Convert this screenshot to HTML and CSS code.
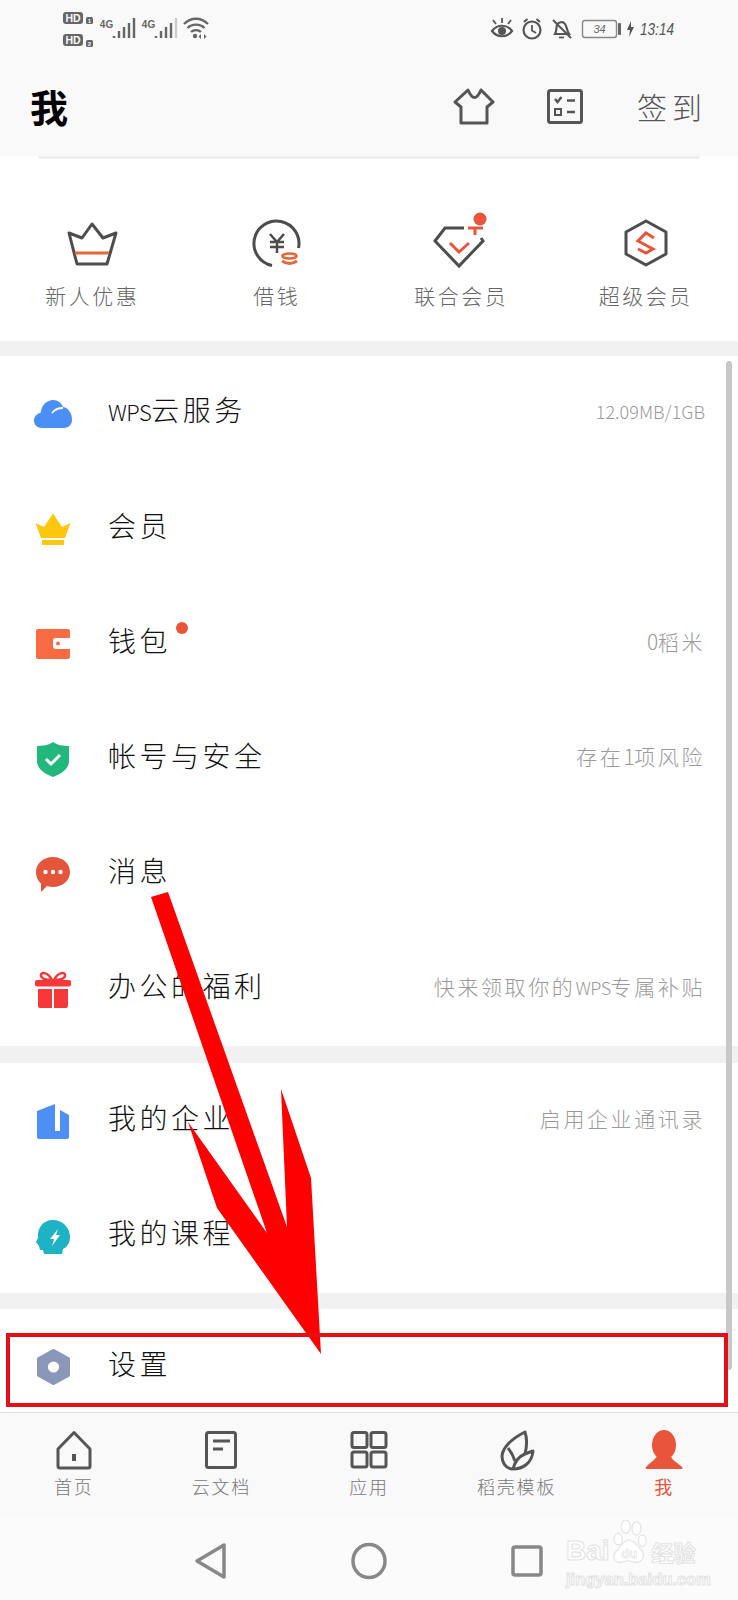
FILE: index.html
```html
<!DOCTYPE html>
<html lang="zh-CN">
<head>
<meta charset="utf-8">
<title>我</title>
<link rel="stylesheet" href="styles.css">
</head>
<body>
<div class="phone">
  <header class="top">
    <div class="status">
      <svg class="st-left" width="150" height="40" viewBox="62 10 150 40">
        <rect x="63" y="12" width="20" height="12" rx="3" fill="#666"/>
        <text x="73" y="22" class="hd">HD</text>
        <rect x="86" y="17" width="7" height="7" rx="1.5" fill="#666"/>
        <text x="89.5" y="23" class="sim">1</text>
        <rect x="63" y="34" width="20" height="12" rx="3" fill="#666"/>
        <text x="73" y="44" class="hd">HD</text>
        <rect x="86" y="40" width="7" height="7" rx="1.5" fill="#666"/>
        <text x="89.5" y="46" class="sim">2</text>
        <text x="106.5" y="28" class="g4">4G</text>
        <g stroke="#666" stroke-width="2.4" fill="none">
          <path d="M114 36V38M119 31V38M124 27V38M129 23V38M134 18V38"/>
          <path d="M156 36V38M161 31V38M166 27V38M171 23V38"/>
          <path d="M176 18V38" stroke="#ccc"/>
        </g>
        <text x="148.5" y="28" class="g4">4G</text>
        <g stroke="#666" stroke-width="2.4" fill="none">
          <path d="M184 24C191 17 201 17 208 24"/>
          <path d="M187.500 28C192 23.500 200 23.500 204.500 28"/>
          <path d="M191 32C193.500 29.500 198.500 29.500 201 32"/>
        </g>
        <circle cx="195" cy="36" r="2.200" fill="#666"/>
        <path d="M201 34V39L198.500 36.500ZM204 34V39L206.500 36.500Z" fill="#666"/>
      </svg>
      <svg class="st-right" width="200" height="26" viewBox="490 16 200 26">
        <g fill="none" stroke="#555" stroke-width="2.200">
          <path d="M492 31C497 24 507 24 512 31C507 38 497 38 492 31Z"/>
          <path d="M493 20L496 24M502 18V23M511 20L508 24" stroke-width="1.800"/>
          <circle cx="532" cy="30" r="8.500"/>
          <path d="M532 25V30.500L536 33" stroke-width="1.800"/>
          <path d="M524 22L527.500 19M540 22L536.500 19" stroke-width="2"/>
          <path d="M555 34C557 31 556 27 557 25C558 22 563 21 565 24C567 27 567 31 569 34Z"/>
          <path d="M553 20L571 38" stroke-width="2"/>
          <path d="M559 37.500H564" stroke-width="1.800"/>
          <rect x="582.500" y="20.500" width="34" height="17" rx="2.500" stroke="#888" stroke-width="1.400"/>
        </g>
        <circle cx="502" cy="31" r="4" fill="#555"/>
        <rect x="618" y="23" width="3" height="12" rx="1" fill="#666"/>
        <path d="M631 21L627 30H630L629 37L634 27H631Z" fill="#555"/>
        <text x="599.500" y="33" class="batt">34</text>
        <text x="640" y="35" class="time" textLength="34" lengthAdjust="spacingAndGlyphs">13:14</text>
      </svg>
    </div>
    <div class="bar">
      <h1 class="title">我</h1>
      <svg class="shirt" width="42" height="38" viewBox="453 88 42 38">
        <path d="M468 91Q474.500 106 481 91L493 103L487 108V124H461V108L455 103Z" fill="none" stroke="#555" stroke-width="3" stroke-linejoin="round"/>
      </svg>
      <svg class="todo" width="39" height="38" viewBox="545 88 39 38">
        <rect x="548.500" y="91.500" width="33" height="32" rx="2" fill="none" stroke="#555" stroke-width="3"/>
        <path d="M555 100L557.500 103L561.500 98M567 101.500H575M567 113H575" fill="none" stroke="#555" stroke-width="2.500"/>
        <rect x="555" y="110" width="6" height="6" fill="none" stroke="#555" stroke-width="2"/>
      </svg>
      <span class="sign">签到</span>
    </div>
  </header>

  <main class="scroll">
    <section class="shortcuts">
      <div class="lip"></div>
      <div class="cols">
        <div class="col">
          <svg width="50" height="50" viewBox="67 218 50 50" fill="none" stroke-width="3" stroke-linejoin="round">
            <path d="M92 224L103 238L116 233L107 264H77L69 233L82 238Z" stroke="#4d4d4d"/>
            <path d="M75 253H109" stroke="#e4683a"/>
          </svg>
          <span>新人优惠</span>
        </div>
        <div class="col">
          <svg width="50" height="50" viewBox="252 218 50 50" fill="none" stroke-width="3">
            <path d="M298.500 248A22.500 22.500 0 1 0 272 265.500" stroke="#4d4d4d"/>
            <path d="M270 234L277 242L284 234M270 242H284M270 247H284M277 242V253" stroke="#4d4d4d" stroke-width="2.500"/>
            <ellipse cx="289.500" cy="256" rx="7" ry="2.500" stroke="#e4683a" stroke-width="2.500"/>
            <path d="M282 261Q289.500 266 297 261" stroke="#e4683a" stroke-width="3"/>
          </svg>
          <span>借钱</span>
        </div>
        <div class="col">
          <svg width="50" height="50" viewBox="436 218 50 50" fill="none" stroke-width="3" class="over">
            <path d="M464 228H445L435 241L459 266L483 241L481 238" stroke="#4d4d4d"/>
            <path d="M450 243L459 252L469 243M468 228H483M475 228V235" stroke="#e8553a"/>
            <circle cx="480" cy="219" r="6.500" fill="#e8553a"/>
          </svg>
          <span>联合会员</span>
        </div>
        <div class="col">
          <svg width="50" height="50" viewBox="621 218 50 50" fill="none" stroke-width="3">
            <path d="M646 221L666 232V254L646 265L626 254V232Z" stroke="#4d4d4d" stroke-linejoin="round"/>
            <path d="M654 238L646 233L638 241L653 249L646 253L638 249" stroke="#e8553a"/>
          </svg>
          <span>超级会员</span>
        </div>
      </div>
    </section>

    <section class="group">
      <div class="row">
        <svg class="ic" width="44" height="44" viewBox="0 0 44 44">
          <path d="M11 36C6 36 3 32.500 3 28.500C3 24.500 6 21.500 9.500 21C10.500 13 16 8 22 8C27 8 30.500 11 32 15C38 16 41 22 41 28C41 33 37 36 33 36Z" fill="#4b8ef4"/>
          <path d="M21 21C24 17 28 16 32 16" fill="none" stroke="#fff" stroke-width="1.800"/>
        </svg>
        <span class="label"><span class="latin">WPS</span>云服务</span>
        <span class="value value-latin">12.09MB/1GB</span>
      </div>
      <div class="row">
        <svg class="ic" width="44" height="44" viewBox="0 0 44 44" fill="#fdc70f">
          <path d="M4.500 16L13 20L22 6.500L31 20L39.500 16L34 31H10Z"/>
          <rect x="11" y="33" width="22" height="5"/>
        </svg>
        <span class="label">会员</span>
      </div>
      <div class="row">
        <svg class="ic" width="44" height="44" viewBox="0 0 44 44">
          <rect x="5" y="7" width="34" height="30" rx="2" fill="#f96b42"/>
          <path d="M39 16H25Q22 16 22 19V24Q22 27 25 27H39Z" fill="#fff"/>
          <circle cx="27" cy="21.500" r="2" fill="#f96b42"/>
        </svg>
        <span class="label has-dot">钱包<i class="dot"></i></span>
        <span class="value"><span class="nr">0</span>稻米</span>
      </div>
      <div class="row">
        <svg class="ic" width="44" height="44" viewBox="0 0 44 44">
          <path d="M6 9C12 9 18 8 22 5C26 8 32 9 38 9V24C38 32 30 37 22 40C14 37 6 32 6 24Z" fill="#22b77b"/>
          <path d="M15 22L20 27L29 18" fill="none" stroke="#fff" stroke-width="3"/>
        </svg>
        <span class="label">帐号与安全</span>
        <span class="value">存在<span class="nr">1</span>项风险</span>
      </div>
      <div class="row">
        <svg class="ic" width="44" height="44" viewBox="0 0 44 44">
          <path d="M22 5C31.500 5 39 11.500 39 20C39 28.500 31.500 35 22 35C20 35 18 34.700 16 34L10 40L10 31.500C6.500 28.500 5 24.500 5 20C5 11.500 12.500 5 22 5Z" fill="#e4553a"/>
          <circle cx="14.500" cy="20" r="2.200" fill="#fff"/>
          <circle cx="22" cy="20" r="2.200" fill="#fff"/>
          <circle cx="29.500" cy="20" r="2.200" fill="#fff"/>
        </svg>
        <span class="label">消息</span>
      </div>
      <div class="row">
        <svg class="ic" width="44" height="44" viewBox="0 0 44 44">
          <path d="M21 13C17 5 9 4 10 9C10.500 12 15 13 21 13ZM23 13C27 5 35 4 34 9C33.500 12 29 13 23 13Z" fill="none" stroke="#f7383a" stroke-width="2.500"/>
          <rect x="4" y="13" width="36" height="6.500" rx="2" fill="#f7383a"/>
          <path d="M7 22H21V41H9Q7 41 7 39ZM23 22H37V39Q37 41 35 41H23Z" fill="#f7383a"/>
        </svg>
        <span class="label">办公的福利</span>
        <span class="value">快来领取你的<span class="latin-sm">WPS</span>专属补贴</span>
      </div>
    </section>

    <section class="group">
      <div class="row">
        <svg class="ic" width="44" height="44" viewBox="0 0 44 44">
          <path d="M6 12L24 5V32H29V11L38 16V38Q38 40 36 40H8Q6 40 6 38Z" fill="#4e8ff5"/>
        </svg>
        <span class="label">我的企业</span>
        <span class="value">启用企业通讯录</span>
      </div>
      <div class="row">
        <svg class="ic" width="44" height="44" viewBox="0 0 44 44">
          <path d="M22 6C32 6 39 14 39 23C39 29 36 33 32 35L31 40H13L12 36H9L8 32L5 28L7 24C6 14 12 6 22 6Z" fill="#1eb3c4"/>
          <path d="M27 15L19 25H23L21 32L29 21H25Z" fill="#fff"/>
        </svg>
        <span class="label">我的课程</span>
      </div>
    </section>

    <section class="group group-last">
      <div class="row">
        <svg class="ic" width="44" height="44" viewBox="0 0 44 44">
          <path d="M22.500 6L37 14V30L22.500 38L8 30V14Z" fill="#8b97b8" stroke="#8b97b8" stroke-width="4" stroke-linejoin="round"/>
          <circle cx="22.500" cy="22" r="5.600" fill="#fff"/>
        </svg>
        <span class="label">设置</span>
      </div>
    </section>
  </main>

  <nav class="tabs">
    <div class="tab">
      <svg width="44" height="44" viewBox="0 0 44 44" fill="none" stroke="#555" stroke-width="3" stroke-linejoin="round">
        <path d="M22 3.500L38 20V37Q38 39 36 39H8Q6 39 6 37V20Z"/>
        <path d="M22 25V32" stroke-width="4"/>
      </svg>
      <span>首页</span>
    </div>
    <div class="tab">
      <svg width="44" height="44" viewBox="0 0 44 44" fill="none" stroke="#555" stroke-width="3">
        <rect x="7.500" y="3.500" width="29" height="35" rx="2"/>
        <path d="M14 12H31M14 20H24"/>
      </svg>
      <span>云文档</span>
    </div>
    <div class="tab">
      <svg width="44" height="44" viewBox="0 0 44 44" fill="none" stroke="#555" stroke-width="3">
        <rect x="5" y="3.500" width="15" height="15" rx="2"/>
        <rect x="24" y="3.500" width="15" height="15" rx="2"/>
        <rect x="5" y="23" width="15" height="15" rx="2"/>
        <rect x="24" y="23" width="15" height="15" rx="2"/>
      </svg>
      <span>应用</span>
    </div>
    <div class="tab">
      <svg width="44" height="44" viewBox="0 0 44 44" fill="none" stroke="#555" stroke-width="3" stroke-linejoin="round">
        <path d="M30 3C22 7 11 14 7.500 24C5.500 33 11 40 18 40C28 40 37 34 38 22C35 23 32 24 30 25C32 17 32 9 30 3Z"/>
        <path d="M13 19C17 24 19 29 20 32M18 40C20 32 25 27 30 25"/>
      </svg>
      <span>稻壳模板</span>
    </div>
    <div class="tab on">
      <svg width="44" height="44" viewBox="0 0 44 44" fill="#e8553a">
        <ellipse cx="22" cy="16" rx="12" ry="15"/>
        <path d="M15 27C15 29 4 37 3.500 39Q3.500 40 5 40H39Q41 40 40.500 38.500C39 36 29 31 29 27Z"/>
      </svg>
      <span>我</span>
    </div>
  </nav>

  <footer class="sys">
    <svg class="back" width="34" height="38" viewBox="0 0 34 38" fill="none" stroke="#888" stroke-width="3.500" stroke-linejoin="round">
      <path d="M30 3V35L3 19Z"/>
    </svg>
    <svg class="home" width="38" height="38" viewBox="0 0 38 38" fill="none" stroke="#888" stroke-width="3.500">
      <ellipse cx="19" cy="19" rx="16" ry="16.500"/>
    </svg>
    <svg class="recent" width="34" height="34" viewBox="0 0 34 34" fill="none" stroke="#888" stroke-width="3.500">
      <rect x="3" y="3" width="28" height="28" rx="2"/>
    </svg>
  </footer>

  <div class="mark">
    <div class="mark-top">
      <span class="mark-b">Bai</span>
      <span class="mark-paw">
        <svg width="38" height="44" viewBox="0 2 42 53" fill="#fff" stroke="#e2e2e2" stroke-width="1.300">
          <ellipse cx="8" cy="25" rx="5" ry="7"/>
          <ellipse cx="17" cy="10" rx="5.500" ry="8"/>
          <ellipse cx="30" cy="12" rx="5.500" ry="8"/>
          <ellipse cx="37" cy="27" rx="4.500" ry="7"/>
          <path d="M21 26C28 26 31 34 36 38C41 44 37 53 30 53C26 53 24 51 20 51C15 51 13 54 8 53C2 51 1 44 6 39C11 35 14 26 21 26Z"/>
          <text x="21" y="48" class="du">du</text>
        </svg>
      </span>
      <span class="mark-cn">经验</span>
    </div>
    <div class="mark-url">jingyan.baidu.com</div>
  </div>

  <div class="scrollbar"></div>
  <svg class="arrow" width="738" height="1600" viewBox="0 0 738 1600">
    <path d="M168 892L287 1227L281 1089L311 1178L321 1354L217 1208L188 1122L267 1233L151 897Z" fill="#fe0000"/>
  </svg>
  <div class="box"></div>
</div>
</body>
</html>
```

FILE: styles.css
```css
* { box-sizing: border-box; }
html, body { margin: 0; padding: 0; background: #fff; }
body {
  font-family: "Noto Sans CJK SC", "Noto Sans", sans-serif;
  color: #111;
}
.phone {
  position: relative;
  width: 738px;
  height: 1600px;
  display: flex;
  flex-direction: column;
  overflow: hidden;
}

/* top */
.top { background: #f9f9f9; height: 156px; flex: none; }
.status {
  height: 56px;
  display: flex;
  align-items: flex-start;
  justify-content: space-between;
  padding: 10px 48px 0 62px;
}
.st-right { margin-top: 6px; }
.hd { font: 700 10.5px "Liberation Sans", sans-serif; fill: #f9f9f9; text-anchor: middle; }
.sim { font: 700 6px "Liberation Sans", sans-serif; fill: #f9f9f9; text-anchor: middle; }
.g4 { font: 700 10px "Liberation Sans", sans-serif; fill: #666; text-anchor: middle; }
.batt { font: italic 400 11px "Liberation Sans", sans-serif; fill: #666; text-anchor: middle; }
.time { font: italic 400 17px "Liberation Sans", sans-serif; fill: #555; }
.bar {
  height: 100px;
  display: flex;
  align-items: center;
  padding: 0 36px 0 30px;
}
.title {
  margin: 0 auto 0 0;
  font-size: 38px;
  font-weight: 700;
  line-height: 1;
  color: #000;
}
.todo { margin-left: 50px; }
.sign {
  margin-left: 53px;
  margin-right: -5px;
  width: 70px;
  font-size: 30px;
  font-weight: 300;
  letter-spacing: 5px;
  line-height: 1;
  color: #555;
  white-space: nowrap;
}

/* scroll */
.scroll {
  flex: 1;
  min-height: 0;
  overflow: hidden;
  background: #f1f1f1;
  display: flex;
  flex-direction: column;
  gap: 17px;
}
.scroll > * { flex: none; }
.shortcuts { background: #fff; height: 185px; margin-bottom: -2px; }
.lip {
  height: 3px;
  margin: 0 38px;
  background: #eee;
  border-radius: 0 0 4px 4px;
}
.cols {
  display: grid;
  grid-template-columns: repeat(4, 1fr);
  padding-top: 59px;
}
.col { display: flex; flex-direction: column; align-items: center; }
.col svg { overflow: visible; }
.col span {
  margin-top: 11px;
  font-size: 21px;
  font-weight: 300;
  line-height: 32px;
  letter-spacing: 2.500px;
  color: #666;
  white-space: nowrap;
}
.group { background: #fff; }
.group-last { margin-top: -1px; }
.row {
  height: 115px;
  display: flex;
  align-items: center;
  padding: 0 33px 0 31px;
}
.ic { flex: none; overflow: visible; }
.label {
  margin-left: 33px;
  padding-bottom: 8px;
  font-size: 28px;
  font-weight: 300;
  letter-spacing: 3.500px;
  line-height: 40px;
  color: #111;
  white-space: nowrap;
}
.latin { font-size: 22px; letter-spacing: -0.500px; }
.has-dot { position: relative; }
.dot {
  position: absolute;
  left: 68px;
  top: 2px;
  width: 12px;
  height: 12px;
  border-radius: 50%;
  background: #e8553a;
}
.value {
  margin-left: auto;
  padding-bottom: 6px;
  font-size: 21px;
  font-weight: 300;
  letter-spacing: 2.600px;
  color: #9a9a9a;
  white-space: nowrap;
}
.value-latin { font-size: 18px; letter-spacing: 0; }
.nr { letter-spacing: -0.500px; }
.latin-sm { font-size: 18px; letter-spacing: -0.500px; }

/* tabs */
.tabs {
  height: 106px;
  flex: none;
  background: #f9f9f9;
  border-top: 1px solid #dedede;
  display: grid;
  grid-template-columns: repeat(5, 1fr);
  padding-top: 16px;
}
.tab { display: flex; flex-direction: column; align-items: center; }
.tab span {
  font-size: 18px;
  font-weight: 300;
  letter-spacing: 1.800px;
  line-height: 26px;
  color: #777;
  white-space: nowrap;
}
.tab.on span { color: #e8553a; font-weight: 400; }

/* system nav */
.sys {
  height: 82px;
  flex: none;
  background: #fbfbfb;
  display: flex;
  align-items: center;
  padding: 3px 0 0 194px;
}
.home { margin-left: 122px; }
.recent { margin-left: 122px; }

/* overlays */
.mark {
  position: absolute;
  left: 566px;
  top: 1520px;
  width: 134px;
  color: #fff;
}
.mark-top { display: flex; align-items: flex-end; height: 46px; }
.mark-b, .mark-cn, .mark-url {
  font-family: "Liberation Sans", sans-serif;
  font-weight: 700;
  -webkit-text-stroke: 1px #e2e2e2;
  white-space: nowrap;
}
.mark-b { font-size: 28px; line-height: 30px; }
.mark-paw { width: 42px; height: 46px; flex: none; }
.mark-paw svg { display: block; }
.mark-cn { font-family: "Noto Sans CJK SC", sans-serif; font-size: 22px; line-height: 30px; }
.mark-url { font-size: 16.500px; line-height: 22px; margin-top: 2px; }
.du { font: 700 16px "Liberation Sans", sans-serif; fill: #fff; stroke: #e2e2e2; stroke-width: 0.8; text-anchor: middle; }
.scrollbar {
  position: absolute;
  left: 726px;
  top: 361px;
  width: 6px;
  height: 1009px;
  background: #c8c8c8;
  border-radius: 3px;
}
.arrow { position: absolute; left: 0; top: 0; pointer-events: none; }
.box {
  position: absolute;
  left: 6px;
  top: 1333px;
  width: 722px;
  height: 74px;
  border: 4px solid #e60f17;
}
```
